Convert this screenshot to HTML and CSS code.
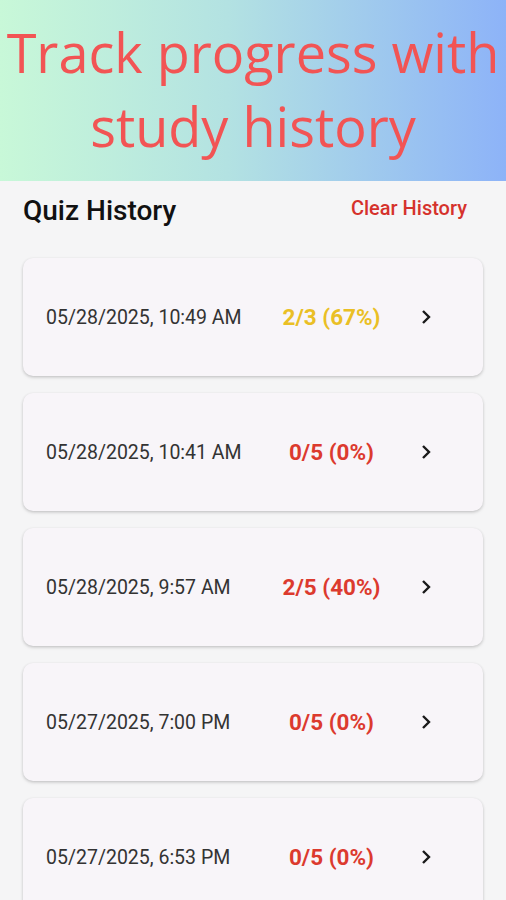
FILE: index.html
```html
<!DOCTYPE html>
<html lang="en">
<head>
  <meta charset="UTF-8">
  <title>Quiz History</title>
  <link rel="stylesheet" href="styles.css">
</head>
<body>
  <div class="banner">
    <h1>Track progress with<br>study history</h1>
  </div>

  <div class="page">
    <div class="top-bar">
      <h2>Quiz History</h2>
      <button class="clear-btn">Clear History</button>
    </div>

    <div class="history-list">
      <div class="history-item">
        <span class="date">05/28/2025, 10:49 AM</span>
        <span class="score mid">2/3 (67%)</span>
        <svg class="chevron" viewBox="0 0 10 16"><polyline points="2,2 8,8 2,14"/></svg>
      </div>
      <div class="history-item">
        <span class="date">05/28/2025, 10:41 AM</span>
        <span class="score low">0/5 (0%)</span>
        <svg class="chevron" viewBox="0 0 10 16"><polyline points="2,2 8,8 2,14"/></svg>
      </div>
      <div class="history-item">
        <span class="date">05/28/2025, 9:57 AM</span>
        <span class="score low">2/5 (40%)</span>
        <svg class="chevron" viewBox="0 0 10 16"><polyline points="2,2 8,8 2,14"/></svg>
      </div>
      <div class="history-item">
        <span class="date">05/27/2025, 7:00 PM</span>
        <span class="score low">0/5 (0%)</span>
        <svg class="chevron" viewBox="0 0 10 16"><polyline points="2,2 8,8 2,14"/></svg>
      </div>
      <div class="history-item">
        <span class="date">05/27/2025, 6:53 PM</span>
        <span class="score low">0/5 (0%)</span>
        <svg class="chevron" viewBox="0 0 10 16"><polyline points="2,2 8,8 2,14"/></svg>
      </div>
    </div>
  </div>
</body>
</html>
```

FILE: styles.css
```css
body {
  font-family: Roboto, "Liberation Sans", sans-serif;
  margin: 0;
  background: #f5f5f6;
  color: #222;
  height: 900px;
  overflow: hidden;
}

.banner {
  height: 181px;
  background: linear-gradient(to right, #c8f8d8, #b3e2e2 45%, #8db3f8);
  display: flex;
  align-items: center;
  justify-content: center;
}

.banner h1 {
  margin: 0;
  font-family: "Open Sans", "Noto Sans", sans-serif;
  font-weight: 400;
  font-size: 54px;
  line-height: 74px;
  color: #f25454;
  text-align: center;
  margin-top: -3px;
  white-space: nowrap;
}

.page {
  padding: 0 23px;
}

.top-bar {
  display: flex;
  align-items: center;
  justify-content: space-between;
  height: 58px;
}

.top-bar h2 {
  margin: 0;
  font-size: 28px;
  font-weight: 500;
  color: #111;
}

.clear-btn {
  background: none;
  border: none;
  font-family: inherit;
  font-size: 20px;
  font-weight: 500;
  color: #d5322c;
  padding: 0 16px 4px 0;
  cursor: pointer;
}

.history-list {
  display: flex;
  flex-direction: column;
  gap: 17px;
  margin-top: 19px;
}

.history-item {
  height: 118px;
  background: #f8f5f9;
  border-radius: 10px;
  box-shadow: 0 1px 3px rgba(0, 0, 0, 0.18), 0 2px 4px rgba(0, 0, 0, 0.06);
  display: flex;
  align-items: center;
  padding-left: 23px;
}

.date {
  width: 196px;
  flex-shrink: 0;
  white-space: nowrap;
  font-size: 19.5px;
  color: #333;
}

.score {
  flex: 1;
  text-align: center;
  font-size: 22.5px;
  font-weight: 700;
}

.score.mid {
  color: #eabf25;
}

.score.low {
  color: #dc3a2e;
}

.chevron {
  width: 10px;
  height: 16px;
  margin: 0 52px 0 0;
  fill: none;
  stroke: #1a1a1a;
  stroke-width: 2.4;
}
```
